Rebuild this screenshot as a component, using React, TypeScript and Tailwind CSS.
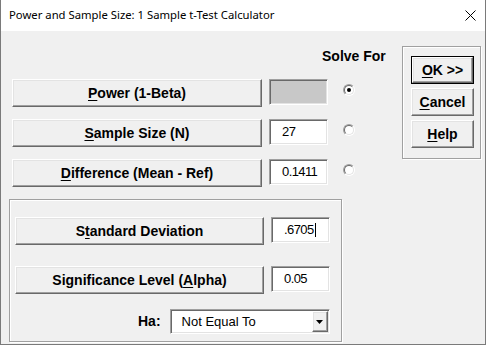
import React from "react";

const raised =
  "bg-[#f0f0f0] border border-t-white border-l-white border-b-[#696969] border-r-[#696969] shadow-[inset_-1px_-1px_0_#a0a0a0,inset_1px_1px_0_#e3e3e3]";
const sunken =
  "border border-t-[#a0a0a0] border-l-[#a0a0a0] border-b-white border-r-white shadow-[inset_1px_1px_0_#696969,inset_-1px_-1px_0_#e3e3e3]";
const etched = "border border-[#a0a0a0] shadow-[inset_1px_1px_0_#fff,1px_1px_0_#fff]";
const btnFont = "font-['Liberation_Sans',Arial,sans-serif] font-bold text-[14px] text-black";
const fieldFont = "font-['Liberation_Sans',Arial,sans-serif] text-[13px] text-black";

function U({ children }: { children: React.ReactNode }) {
  return <span className="underline underline-offset-[2px] decoration-1">{children}</span>;
}

function Radio({ checked }: { checked?: boolean }) {
  return (
    <div className="mt-[5px] ml-[15px] w-[12px] h-[12px] rounded-full border border-t-[#a0a0a0] border-l-[#a0a0a0] border-b-white border-r-white">
      <div className="w-full h-full rounded-full bg-white border border-t-[#696969] border-l-[#696969] border-b-[#e3e3e3] border-r-[#e3e3e3] flex items-center justify-center">
        {checked && <div className="w-[4px] h-[4px] rounded-full bg-black" />}
      </div>
    </div>
  );
}

function Field({ value, disabled, cursor, w = "w-[59px]" }: { value?: string; disabled?: boolean; cursor?: boolean; w?: string }) {
  return (
    <div
      className={`${sunken} ${w} h-[26px] ml-[7px] flex items-center pl-[12px] ${fieldFont} tracking-[-0.6px] ${
        disabled ? "bg-[#c8c8c8]" : "bg-white"
      }`}
    >
      {value}
      {cursor && <span className="inline-block w-[1px] h-[14px] bg-black ml-[1px]" />}
    </div>
  );
}

function Row({ label, children, w = "w-[250px]" }: { label: React.ReactNode; children?: React.ReactNode; w?: string }) {
  return (
    <div className="flex items-start">
      <div className={`${raised} ${w} h-[28px] flex items-center justify-center ${btnFont}`}>{label}</div>
      {children}
    </div>
  );
}

export default function App() {
  return (
    <div className="w-[486px] h-[345px] border-l border-r border-b border-[#7a7a7a] bg-white flex flex-col">
      <div className="h-[31px] flex items-center justify-between pl-[8px] pr-[9px] bg-white">
        <span className="font-['Noto_Sans',sans-serif] text-[11.3px] text-black">
          Power and Sample Size: 1 Sample t-Test Calculator
        </span>
        <svg width="11" height="11" viewBox="0 0 11 11">
          <path d="M0.5 0.5 L10.5 10.5 M10.5 0.5 L0.5 10.5" stroke="#000" strokeWidth="1" />
        </svg>
      </div>
      <div className="flex-1 bg-[#f0f0f0] flex flex-col">
        <div className="flex pl-[11px] pt-[15px]">
          <div className="w-[390px] flex flex-col">
            <div className={`mt-[2px] h-[16px] leading-[16px] ml-[310px] ${btnFont}`}>Solve For</div>
            <div className="mt-[15px] flex flex-col gap-[12px]">
              <Row
                label={
                  <span>
                    <U>P</U>ower (1-Beta)
                  </span>
                }
              >
                <Field disabled />
                <Radio checked />
              </Row>
              <Row
                label={
                  <span>
                    <U>S</U>ample Size (N)
                  </span>
                }
              >
                <Field value="27" />
                <Radio />
              </Row>
              <Row
                label={
                  <span>
                    <U>D</U>ifference (Mean - Ref)
                  </span>
                }
              >
                <Field value="0.1411" />
                <Radio />
              </Row>
            </div>
          </div>
          <div className={`${etched} w-[79px] h-[113px] pl-[8px] pt-[9px] flex flex-col gap-[4px]`}>
            <div className="w-[63px] h-[28px] border border-black">
              <div className={`${raised} w-full h-full flex items-center justify-center ${btnFont}`}>
                <span>
                  <U>O</U>K &gt;&gt;
                </span>
              </div>
            </div>
            <div className={`${raised} w-[63px] h-[28px] flex items-center justify-center ${btnFont}`}>
              <span>
                <U>C</U>ancel
              </span>
            </div>
            <div className={`${raised} w-[63px] h-[28px] flex items-center justify-center ${btnFont}`}>
              <span>
                <U>H</U>elp
              </span>
            </div>
          </div>
        </div>
        <div className={`${etched} ml-[8px] mt-[12px] w-[333px] h-[143px] pl-[5px] pt-[17px] flex flex-col`}>
          <Row
            w="w-[249px]"
            label={
              <span>
                S<U>t</U>andard Deviation
              </span>
            }
          >
            <Field value=".6705" cursor />
          </Row>
          <div className="mt-[21px]">
            <Row
              w="w-[249px]"
              label={
                <span>
                  Significance Level (<U>A</U>lpha)
                </span>
              }
            >
              <Field value="0.05" />
            </Row>
          </div>
          <div className="mt-[15px] flex items-center">
            <span className={`ml-[123px] ${btnFont}`}>Ha:</span>
            <div className={`${sunken} ml-[9px] w-[160px] h-[25px] bg-white flex items-center justify-between`}>
              <span className={`pl-[11px] ${fieldFont}`}>Not Equal To</span>
              <div className={`${raised} w-[16px] h-[21px] mr-[1px] flex items-center justify-center`}>
                <svg width="7" height="4" viewBox="0 0 7 4">
                  <path d="M0 0 H7 L3.5 4 Z" fill="#000" />
                </svg>
              </div>
            </div>
          </div>
        </div>
      </div>
    </div>
  );
}
